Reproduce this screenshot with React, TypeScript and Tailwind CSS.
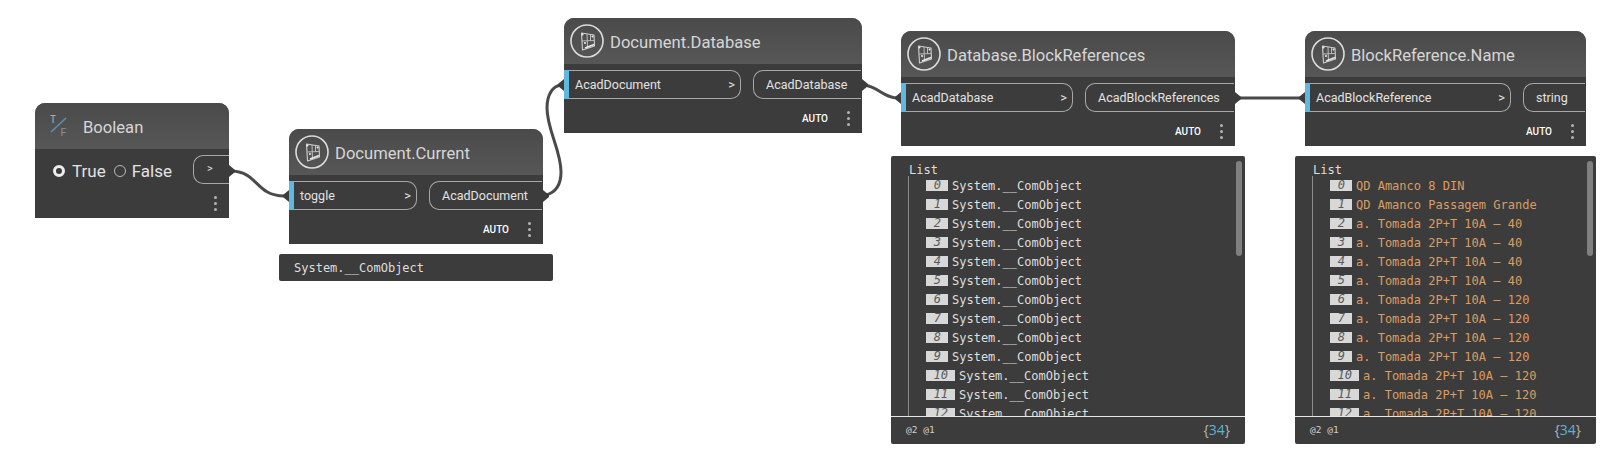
const UI_FONT = "font-['Roboto','Noto_Sans',sans-serif]";

const NodeIcon = () => (
  <svg width="36" height="36" viewBox="0 0 36 36" fill="none" className="shrink-0">
    <circle cx="18" cy="18" r="16" stroke="#dcdcdc" strokeWidth="1.6" />
    <path d="M12.5 10 L25 12 L25.5 23 L13.5 27 Z" stroke="#d0d0d0" strokeWidth="1.1" strokeLinejoin="round" />
    <path d="M18 11 L18.5 25.5 M13 18 L25 17.5 M21.5 12 L21.5 17.5" stroke="#bcbcbc" strokeWidth="1" />
    <path d="M16 25 L25 21.5" stroke="#e8e8e8" strokeWidth="1.6" />
    <circle cx="13.5" cy="11.5" r="1" fill="#efefef" />
    <circle cx="23.5" cy="13.5" r="1" fill="#efefef" />
    <circle cx="16" cy="20" r="1" fill="#efefef" />
  </svg>
);

const BoolIcon = () => (
  <svg width="22" height="28" viewBox="0 0 22 28" className="shrink-0">
    <path d="M1 20 L16 6" stroke="#5d8fb0" strokeWidth="1.6" />
    <text x="0" y="10.5" fontSize="10" fill="#b4b4b4" fontFamily="Roboto, sans-serif">T</text>
    <text x="10.5" y="24" fontSize="10.5" fill="#8e8e8e" fontFamily="Roboto, sans-serif">F</text>
  </svg>
);

const Dots = () => (
  <div className="flex flex-col gap-[3px]">
    <span className="w-[3px] h-[3px] rounded-full bg-[#b4b4b4]" />
    <span className="w-[3px] h-[3px] rounded-full bg-[#b4b4b4]" />
    <span className="w-[3px] h-[3px] rounded-full bg-[#b4b4b4]" />
  </div>
);

const Header = ({ title }: { title: string }) => (
  <div className="h-[46px] flex items-center pl-[5px] gap-[5px] rounded-t-[10px] bg-gradient-to-b from-[#4a4a4a] to-[#575757]">
    <NodeIcon />
    <span className="text-[16.6px] leading-none pt-[4px] text-[#d6d6d6] whitespace-nowrap">{title}</span>
  </div>
);

const Node = ({ left, top, width, title, input, inWidth, output }: any) => (
  <div className={`absolute ${UI_FONT} bg-[#3c3c3c] rounded-t-[10px] h-[115px]`} style={{ left, top, width }}>
    <Header title={title} />
    <div className="flex items-center pt-[6px] gap-[12px]">
      <div className="w-[5px] h-[29px] bg-[#60b8e0] shrink-0" />
      <div
        className="-ml-[12px] h-[29px] flex items-center justify-between pl-[6px] pr-[5px] pt-[1px] border border-l-0 border-[#a8a8a8] rounded-r-[10px] text-[12.5px] text-[#e2e2e2] shrink-0"
        style={{ width: inWidth }}
      >
        <span>{input}</span>
        <span className="text-[13px]">&gt;</span>
      </div>
      <div className="flex-1 h-[29px] flex items-center pl-[12px] pt-[1px] border border-r-0 border-[#a8a8a8] rounded-l-[10px] text-[12.5px] text-[#e2e2e2] whitespace-nowrap overflow-hidden mr-[1px]">
        {output}
      </div>
    </div>
    <div className="flex items-center justify-end gap-[18px] pr-[12px] pt-[12px]">
      <span className="text-[10px] font-medium text-white leading-none pr-[1px]">AUTO</span>
      <Dots />
    </div>
  </div>
);

const BooleanNode = () => (
  <div className={`absolute left-[35px] top-[103px] w-[194px] h-[115px] ${UI_FONT} bg-[#3c3c3c] rounded-t-[10px]`}>
    <div className="h-[46px] flex items-center pl-[15px] gap-[11px] rounded-t-[10px] bg-gradient-to-b from-[#4a4a4a] to-[#575757]">
      <BoolIcon />
      <span className="text-[16.6px] leading-none pt-[4px] text-[#d6d6d6]">Boolean</span>
    </div>
    <div className="flex items-center pt-[6px]">
      <div className="flex items-center pl-[18px] pt-[3px] text-[17px] leading-none text-[#e2e2e2] w-[158px]">
        <span className="w-[12px] h-[12px] rounded-full border-[3.5px] border-[#eeeeee] bg-[#3c3c3c] shrink-0" />
        <span className="ml-[7px]">True</span>
        <span className="w-[12px] h-[12px] rounded-full border border-[#bbbbbb] ml-[8px] shrink-0" />
        <span className="ml-[6px]">False</span>
      </div>
      <div className="w-[36px] h-[29px] flex items-center pl-[13px] border border-r-0 border-[#a8a8a8] rounded-l-[10px] text-[11px] text-[#e2e2e2]">&gt;</div>
    </div>
    <div className="flex justify-end pr-[12px] pt-[12px]"><Dots /></div>
  </div>
);

const Row = ({ i, text, orange }: { i: number; text: string; orange?: boolean }) => (
  <div className="h-[19px] flex items-center shrink-0">
    <span className={`${i > 9 ? 'w-[29px]' : 'w-[22px]'} h-[11px] bg-[#d8d8d8] text-[#5a5a5a] italic text-right pr-[7px] text-[12px] leading-[11px] shrink-0`}>{i}</span>
    <span className={`ml-[4px] whitespace-nowrap ${orange ? 'text-[#dc9c62]' : 'text-[#dedede]'}`}>{text}</span>
  </div>
);

const ListPreview = ({ left, width, items, orange }: any) => (
  <div className="absolute top-[156px] h-[288px] bg-[#3c3c3c] rounded-[2px] font-['DejaVu_Sans_Mono',monospace] text-[12px]" style={{ left, width }}>
    <div className="h-[260px] overflow-hidden pl-[18px] pt-[7px]">
      <div className="leading-[14px] h-[13px] text-[#dedede]">List</div>
      <div className="ml-[-1px] border-l border-[#8c8c8c] pl-[17px] h-[240px]">
        {items.map((t: string, i: number) => (
          <Row key={i} i={i} text={t} orange={orange} />
        ))}
      </div>
    </div>
    <div className="border-t border-[#e6e6e6] h-[28px] flex items-center justify-between pl-[15px] pr-[15px]">
      <span className="text-[9.5px] text-[#cfcfcf]">@2 @1</span>
      <span className="text-[14px] leading-none pb-[2px] text-[#b4b4b4] font-['Open_Sans',sans-serif]">
        {'{'}<span className="text-[#5cb1d6]">34</span>{'}'}
      </span>
    </div>
    <div className="absolute right-[3px] top-[5px] w-[6px] h-[95px] rounded-[3px] bg-[#808080]" />
  </div>
);

const Wires = () => (
  <svg className="absolute left-0 top-0" width="1620" height="456" fill="none">
    <g stroke="#4a4a4a" strokeWidth="3">
      <path d="M232 171 C258 172 256 196 284 196" />
      <path d="M546 195 C557 192 561 184 561 172 C561 150 547 130 547 108 C547 94 553 86 561 85" />
      <path d="M865 85 C880 88 884 98 898 98" />
      <path d="M1238 98 L1302 98" />
    </g>
    <g fill="#3c3c3c">
      <path d="M229 165 L235 170 L235 172 L229 177 Z" />
      <path d="M289 190 L283 195 L283 197 L289 202 Z" />
      <path d="M543 190 L549 195 L549 197 L543 202 Z" />
      <path d="M564 79 L558 84 L558 86 L564 91 Z" />
      <path d="M862 79 L868 84 L868 86 L862 91 Z" />
      <path d="M901 92 L895 97 L895 99 L901 104 Z" />
      <path d="M1235 92 L1241 97 L1241 99 L1235 104 Z" />
      <path d="M1305 92 L1299 97 L1299 99 L1305 104 Z" />
    </g>
  </svg>
);

const comObjects = Array.from({ length: 13 }, () => 'System.__ComObject');
const names = [
  'QD Amanco 8 DIN',
  'QD Amanco Passagem Grande',
  ...Array.from({ length: 4 }, () => 'a. Tomada 2P+T 10A – 40'),
  ...Array.from({ length: 7 }, () => 'a. Tomada 2P+T 10A – 120'),
];

export default function App() {
  return (
    <div className="relative w-[1620px] h-[456px] bg-white overflow-hidden">
      <Wires />
      <BooleanNode />
      <Node left={289} top={129} width={254} title="Document.Current" input="toggle" inWidth={123} output="AcadDocument" />
      <Node left={564} top={18} width={298} title="Document.Database" input="AcadDocument" inWidth={172} output="AcadDatabase" />
      <Node left={901} top={31} width={334} title="Database.BlockReferences" input="AcadDatabase" inWidth={167} output="AcadBlockReferences" />
      <Node left={1305} top={31} width={281} title="BlockReference.Name" input="AcadBlockReference" inWidth={201} output="string" />
      <div className="absolute left-[279px] top-[254px] w-[274px] h-[27px] bg-[#3c3c3c] rounded-[2px] flex items-center pl-[15px] font-['DejaVu_Sans_Mono',monospace] text-[12px] text-[#dedede]">
        System.__ComObject
      </div>
      <ListPreview left={891} width={354} items={comObjects} />
      <ListPreview left={1295} width={301} items={names} orange />
    </div>
  );
}
